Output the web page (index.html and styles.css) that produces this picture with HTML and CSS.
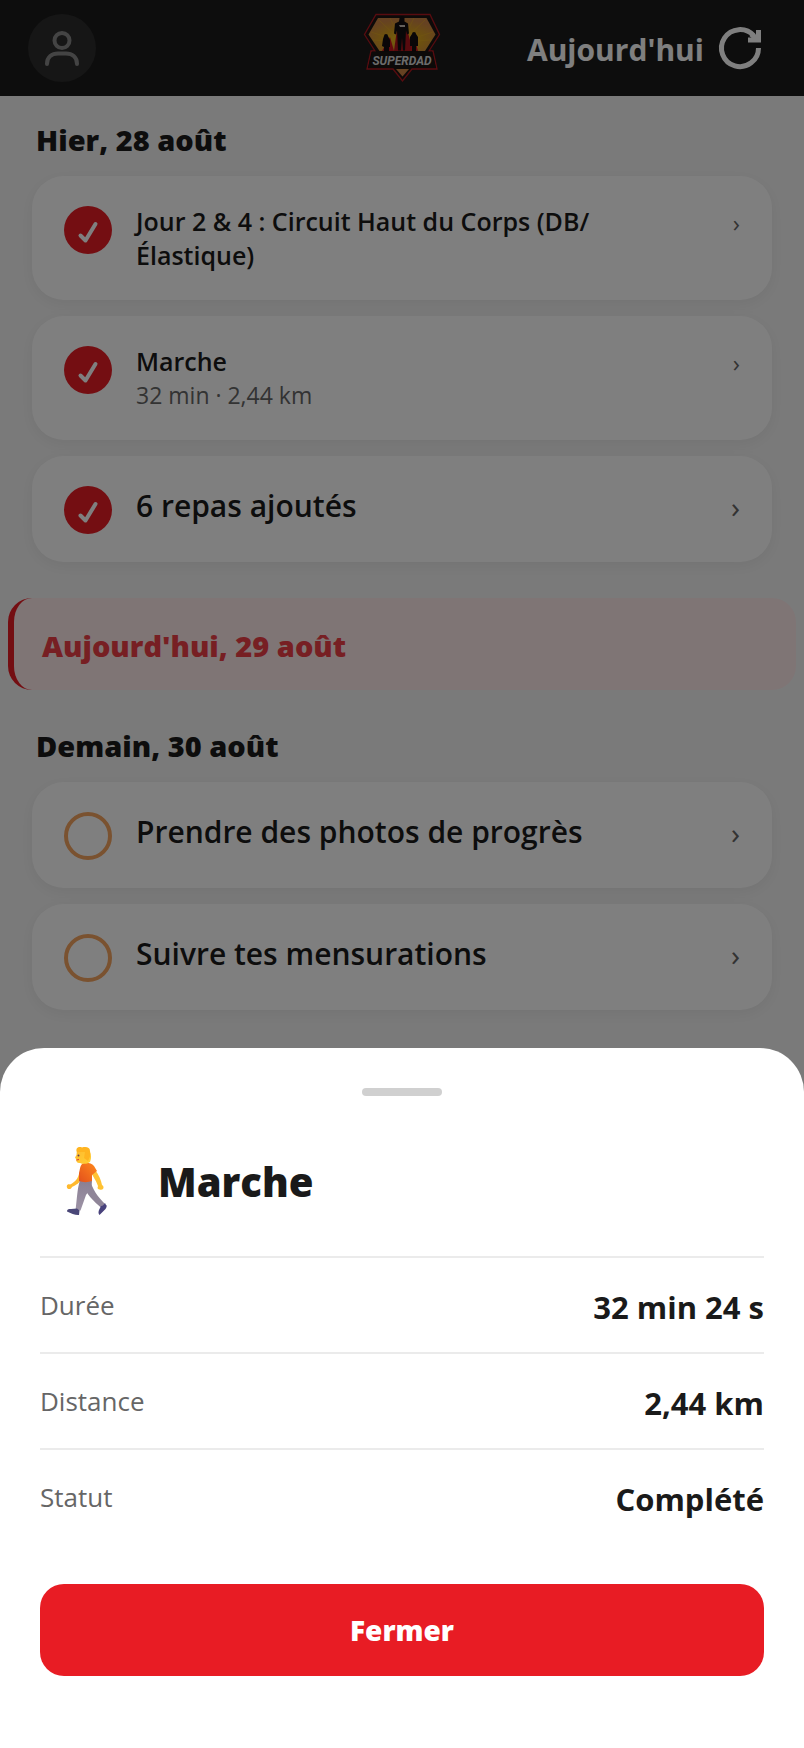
FILE: index.html
```html
<!DOCTYPE html>
<html lang="fr">
<head>
    <meta charset="UTF-8">
    <meta name="viewport" content="width=device-width, initial-scale=1.0">
    <title>SuperDad</title>
    <link rel="stylesheet" href="styles.css">
</head>
<body>
    <header class="header">
        <button type="button" class="avatar" aria-label="Profil">
            <svg width="68" height="68" viewBox="0 0 68 68" fill="none" stroke="currentColor" stroke-width="4" stroke-linecap="round">
                <circle cx="34" cy="26.5" r="7.5"/>
                <path d="M19 50c0-7 5-10.5 11-10.5h8c6 0 11 3.5 11 10.5"/>
            </svg>
        </button>
        <svg class="logo" width="84" height="72" viewBox="0 0 84 72" role="img" aria-label="SuperDad">
            <defs>
                <radialGradient id="gold" cx="50%" cy="65%" r="60%">
                    <stop offset="0" stop-color="#f0c818"/>
                    <stop offset="0.5" stop-color="#d8a020"/>
                    <stop offset="1" stop-color="#cc8444"/>
                </radialGradient>
            </defs>
            <path d="M16 2.5H70L79.500 22.500 69 39h4l4 18H52L42.5 69 33 57H7l4-18h4L4.5 22.500Z" fill="#1a1412" stroke="#b01820" stroke-width="1.3"/>
            <path d="M18 6H66.500L75.500 22.500 65 39H19.500L8.500 22.500Z" fill="url(#gold)"/>
            <path d="M42 30L19 8M42 30L30 6M42 30L54 6M42 30L65 8M42 30L73 20M42 30L11 20M42 30L13 28M42 30L71 28" stroke="#e8b020" stroke-width="1" opacity="0.5"/>
            <path d="M37 17L34 39H53L47 17Z" fill="#b0141c"/>
            <path d="M30 25L22 39H34ZM54 24L58 39H50Z" fill="#c8141c"/>
            <path d="M39.5 6.5a2.500 2.500 0 0 1 5 0v3l3.5 2 1 10-2 1-1-4-1 20h-2l-1-13-1 13h-3l-1-20-1 4-2-1 1-10 4-2ZM24 24a2 2 0 1 1 4 0l2 4v7h-1v5h-5v-5l-2-1 1-7ZM52 22a2 2 0 1 1 4 0l2 3v9h-2v6h-4v-6h-2v-9Z" fill="#120e10"/>
            <path d="M39 13h6v2h-5Z" fill="#c8c0b8"/>
            <path d="M36 57H49L42.5 64.5Z" fill="#cc8444"/>
            <path d="M12 39.5H72L76 56H8Z" fill="#1a1412"/>
            <text class="logo-text" x="42" y="53" text-anchor="middle">SUPERDAD</text>
        </svg>
        <button type="button" class="today-btn">
            <span class="today-label">Aujourd'hui</span>
            <svg width="48" height="48" viewBox="0 0 48 48" fill="none" stroke="currentColor" stroke-width="5">
                <path d="M42.5 24A18.5 18.5 0 1 1 38 12"/>
                <path d="M42.5 6V16H32"/>
                <path d="M35 10L42 16"/>
            </svg>
        </button>
    </header>

    <main class="days">
        <section class="day">
            <h2 class="day-title">Hier, 28 août</h2>
            <button type="button" class="card">
                <span class="status done"><svg width="48" height="48" viewBox="0 0 48 48"><path d="M16.500 29.500L21.500 34.500 31.500 18"/></svg></span>
                <span class="card-text"><span class="card-title">Jour 2 &amp; 4 : Circuit Haut du Corps (DB/<wbr>Élastique)</span></span>
                <span class="chevron">›</span>
            </button>
            <button type="button" class="card">
                <span class="status done"><svg width="48" height="48" viewBox="0 0 48 48"><path d="M16.500 29.500L21.500 34.500 31.500 18"/></svg></span>
                <span class="card-text">
                    <span class="card-title">Marche</span>
                    <span class="card-sub">32 min · 2,44 km</span>
                </span>
                <span class="chevron">›</span>
            </button>
            <button type="button" class="card large">
                <span class="status done"><svg width="48" height="48" viewBox="0 0 48 48"><path d="M16.500 29.500L21.500 34.500 31.500 18"/></svg></span>
                <span class="card-text"><span class="card-title">6 repas ajoutés</span></span>
                <span class="chevron">›</span>
            </button>
        </section>

        <section class="day current">
            <h2 class="day-title">Aujourd'hui, 29 août</h2>
        </section>

        <section class="day">
            <h2 class="day-title">Demain, 30 août</h2>
            <button type="button" class="card large">
                <span class="status"></span>
                <span class="card-text"><span class="card-title">Prendre des photos de progrès</span></span>
                <span class="chevron">›</span>
            </button>
            <button type="button" class="card large">
                <span class="status"></span>
                <span class="card-text"><span class="card-title">Suivre tes mensurations</span></span>
                <span class="chevron">›</span>
            </button>
        </section>
    </main>

    <div class="overlay">
        <div class="sheet" role="dialog" aria-modal="true" aria-labelledby="sheetTitle">
            <div class="handle"></div>
            <div class="sheet-head">
                <svg class="walker" width="96" height="72" viewBox="0 0 96 72" aria-hidden="true">
                    <defs>
                        <linearGradient id="skin" x1="0" y1="0" x2="1" y2="1">
                            <stop offset="0" stop-color="#ffb92e"/>
                            <stop offset="1" stop-color="#ffd034"/>
                        </linearGradient>
                        <linearGradient id="shirt" x1="1" y1="0" x2="0" y2="1">
                            <stop offset="0" stop-color="#ff8a1c"/>
                            <stop offset="1" stop-color="#e3501c"/>
                        </linearGradient>
                        <linearGradient id="pants" x1="0" y1="0" x2="0" y2="1">
                            <stop offset="0" stop-color="#8a7f93"/>
                            <stop offset="1" stop-color="#9d93a6"/>
                        </linearGradient>
                    </defs>
                    <!-- arms -->
                    <path d="M39 28C37 35 33 37 30 38.5c-3-1-4 2-2.5 4 2 1.5 4 0 4.5-1.5C36 39 40 37 42 32Z" fill="#ffb92e"/>
                    <path d="M51 26l4-2c4 5 6 10 7 15 2 1 2 4 0 4.5-2 .5-4 0-4.5-1.5l.5-2C56 34 53 31 51 26Z" fill="#ffc233"/>
                    <!-- legs -->
                    <path d="M43 34l7-1c2 10 8 18 15 25l-3.5 4C53 55 47 48 43 40Z" fill="#8f8598"/>
                    <path d="M40 34H52C52 42 49 45 46 49L40.5 64.5H35.5C37 53 37 44 40 34Z" fill="url(#pants)"/>
                    <!-- shoes -->
                    <path d="M37 62.5l2.5 2-.5 4.5c-3 .5-8-1.5-12-3.5 0-2 1-2.5 4-2.5Z" fill="#4a4778"/>
                    <path d="M61 60c2 0 3-2 4-3l1 2c1 0 1 2-.5 4l-6 6c-1.5-2-1-3-.5-5Z" fill="#48427c"/>
                    <!-- shirt -->
                    <path d="M42 18c3-2 9-1.5 12 2l3 5-5 4v6c-4 1.5-9 1.5-13 0V27c1-4 1-7 3-9Z" fill="url(#shirt)"/>
                    <!-- head -->
                    <path d="M37 3h10c4 2 5 8 3 13-3 2-7 2.500-10 1-3 .5-4-2-4-4l-1-1.500 1.500-2.500Z" fill="url(#skin)"/>
                    <path d="M37 6c-2-4 2-6 5-4.500C46 .5 50 1 50 5c1 4-.5 7-2 10l-4-3 1-6Z" fill="#ffb420"/>
                    <circle cx="38.5" cy="9.5" r="1" fill="#654050"/>
                    <path d="M36.5 14l2.500-.5" stroke="#e0383c" stroke-width="1"/>
                </svg>
                <h1 class="sheet-title" id="sheetTitle">Marche</h1>
            </div>
            <dl class="details">
                <div class="row">
                    <dt>Durée</dt>
                    <dd>32 min 24 s</dd>
                </div>
                <div class="row">
                    <dt>Distance</dt>
                    <dd>2,44 km</dd>
                </div>
                <div class="row">
                    <dt>Statut</dt>
                    <dd>Complété</dd>
                </div>
            </dl>
            <button type="button" class="close-btn">Fermer</button>
        </div>
    </div>
</body>
</html>
```
FILE: styles.css
```css
* {
    box-sizing: border-box;
}
body {
    margin: 0;
    min-height: 100vh;
    background-color: #f5f5f5;
    color: #1a1a1a;
    font-family: "Segoe UI", "Open Sans", "Noto Sans", sans-serif;
}
h1, h2, dl, dd {
    margin: 0;
}
button {
    border: none;
    padding: 0;
    font-family: inherit;
    cursor: pointer;
}
svg {
    display: block;
}

/* header */
.header {
    display: grid;
    grid-template-columns: 1fr auto 1fr;
    align-items: center;
    height: 96px;
    padding: 0 40px 0 28px;
    background-color: #1a1a1a;
}
.avatar {
    width: 68px;
    height: 68px;
    border-radius: 50%;
    background-color: #2c2c2c;
    color: #888;
}
.logo {
    margin-left: 12px;
}
.logo-text {
    font-family: Roboto, sans-serif;
    font-size: 12px;
    font-weight: bold;
    font-style: italic;
    fill: #d8d8d8;
}
.today-btn {
    display: flex;
    align-items: flex-end;
    justify-self: end;
    gap: 12px;
    background: none;
    color: #fff;
}
.today-label {
    font-size: 30px;
    line-height: 44px;
    font-weight: 700;
}

/* days list */
.day {
    display: flex;
    flex-direction: column;
    gap: 16px;
    padding: 24px 32px 36px;
}
.day-title {
    padding-left: 4px;
    font-size: 29px;
    line-height: 40px;
    font-weight: 800;
}
.day.current {
    margin: 0 8px 12px;
    padding: 28px 24px 24px;
    border-left: 6px solid #e81c24;
    border-radius: 24px;
    background-color: #feeaeb;
}
.day.current .day-title {
    color: #ee3e46;
}
.card {
    display: flex;
    align-items: flex-start;
    gap: 24px;
    padding: 28px 32px;
    border-radius: 32px;
    background-color: #fff;
    color: #1a1a1a;
    text-align: left;
    box-shadow: 0 4px 16px rgba(0, 0, 0, 0.06);
}
.card-text {
    display: flex;
    flex: 1;
    flex-direction: column;
}
.card-title {
    max-width: 520px;
    font-size: 25px;
    line-height: 34px;
    font-weight: 600;
}
.card-sub {
    color: #666;
    font-size: 23px;
    line-height: 34px;
}
.chevron {
    color: #666;
    font-size: 24px;
    line-height: 38px;
}
.large .card-title {
    font-size: 30px;
    line-height: 44px;
}
.large .chevron {
    font-size: 30px;
    line-height: 46px;
}
.status {
    width: 48px;
    height: 48px;
    margin-top: 2px;
    border: 4px solid #f4a460;
    border-radius: 50%;
}
.status.done {
    border: none;
    background-color: #e81c24;
}
.status path {
    fill: none;
    stroke: #fff;
    stroke-width: 4;
    stroke-linecap: round;
    stroke-linejoin: round;
}

/* bottom sheet */
.overlay {
    position: fixed;
    inset: 0;
    display: flex;
    flex-direction: column;
    justify-content: flex-end;
    background-color: rgba(0, 0, 0, 0.5);
}
.sheet {
    padding: 40px 40px 72px;
    border-radius: 44px 44px 0 0;
    background-color: #fff;
}
.handle {
    width: 80px;
    height: 8px;
    margin: 0 auto;
    border-radius: 4px;
    background-color: #d0d0d0;
}
.sheet-head {
    display: flex;
    align-items: center;
    gap: 22px;
    padding: 50px 0 38px;
}
.sheet-title {
    font-size: 40px;
    line-height: 56px;
    font-weight: 800;
}
.row {
    display: flex;
    align-items: flex-start;
    justify-content: space-between;
    height: 96px;
    padding-top: 26px;
    border-top: 2px solid #ebebeb;
}
.row dt {
    color: #666;
    font-size: 26px;
    line-height: 42px;
}
.row dd {
    font-size: 31px;
    line-height: 46px;
    font-weight: 700;
}
.close-btn {
    width: 100%;
    height: 92px;
    margin-top: 40px;
    border-radius: 24px;
    background-color: #e81c24;
    color: #fff;
    font-size: 28px;
    font-weight: 800;
}
```
